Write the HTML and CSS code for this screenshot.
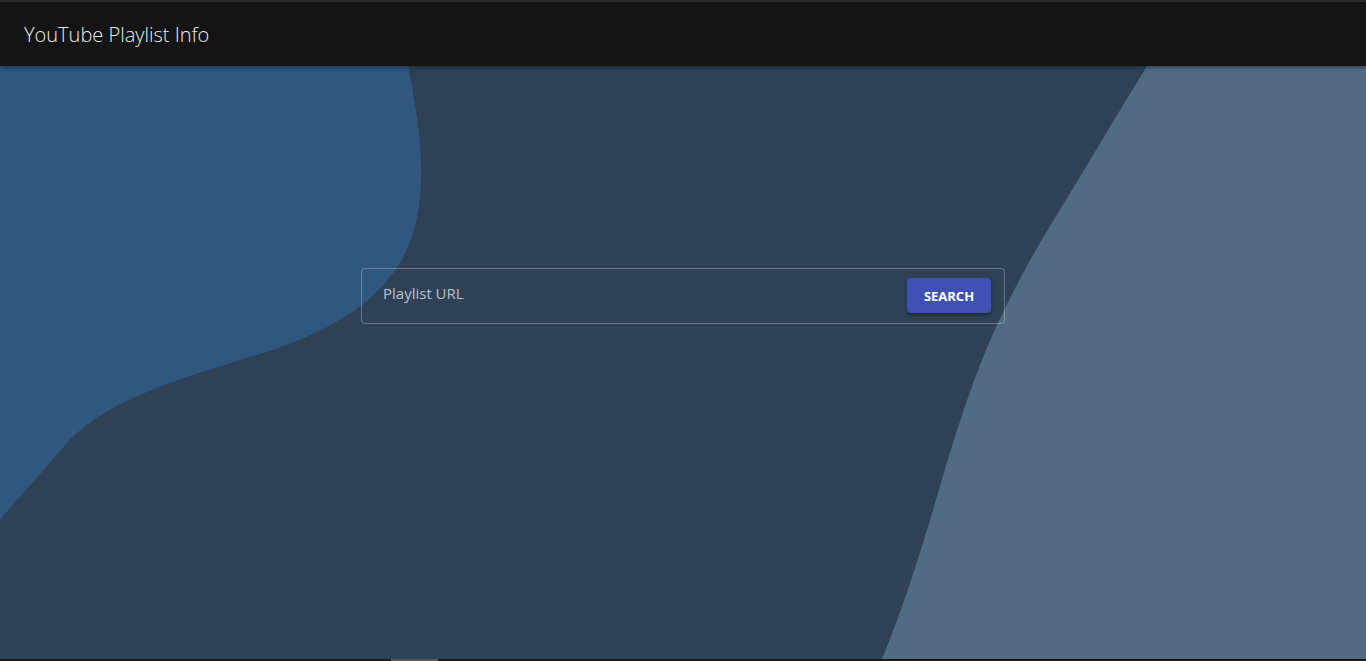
FILE: index.html
```html
<!DOCTYPE html>
<html>
<head>
<meta charset="utf-8">
<link rel="stylesheet" href="styles.css">
</head>
<body>
<header class="appbar">
  <h1 class="title">YouTube Playlist Info</h1>
</header>
<main class="stage">
  <svg class="bg" viewBox="0 0 1366 593" preserveAspectRatio="none" aria-hidden="true">
    <path fill="#305780" d="M0 0 L408 0 C418 50 428 110 415 160 C400 220 350 260 260 288 C170 316 100 335 60 385 C35 415 15 435 0 454 Z"/>
    <path fill="#526b85" d="M1147 0 L1366 0 L1366 593 L882 593 C900 550 920 490 940 420 C970 320 990 260 1050 160 C1090 95 1110 60 1147 0 Z"/>
  </svg>
  <form class="search">
    <span class="placeholder">Playlist URL</span>
    <button type="button" class="btn">SEARCH</button>
  </form>
</main>
<div class="scrollbar"><div class="thumb"></div></div>
</body>
</html>
```
FILE: styles.css
```css
html, body {
  margin: 0;
  padding: 0;
  height: 100%;
  overflow: hidden;
}
body {
  background: #2f4156;
  font-family: "Open Sans", "Noto Sans", sans-serif;
  display: flex;
  flex-direction: column;
}
.appbar {
  height: 64px;
  border-top: 2px solid #2b2b2b;
  background: #141414;
  display: flex;
  align-items: center;
  padding-left: 24px;
  box-shadow: 0 2px 4px rgba(0,0,0,0.35);
  position: relative;
  z-index: 2;
  flex: none;
}
.title {
  margin: 0;
  font-weight: 300;
  font-size: 20px;
  color: #ececec;
  letter-spacing: 0;
}
.stage {
  position: relative;
  flex: 1;
  display: flex;
  justify-content: center;
  align-items: flex-start;
  padding-top: 202px;
}
.bg {
  position: absolute;
  inset: 0;
  width: 100%;
  height: 100%;
}
.search {
  position: relative;
  box-sizing: border-box;
  width: 644px;
  height: 56px;
  border: 1px solid rgba(255,255,255,0.28);
  border-radius: 4px;
  display: flex;
  align-items: center;
  justify-content: space-between;
  padding: 0 13px 0 21px;
}
.placeholder {
  color: #b7c0ca;
  font-size: 15px;
  margin-top: -7px;
}
.btn {
  background: #3f51b5;
  color: #fff;
  border: 0;
  border-radius: 4px;
  height: 35px;
  width: 84px;
  margin-top: -1px;
  font-family: "Open Sans", sans-serif;
  font-weight: 700;
  font-size: 13px;
  box-shadow: 0 2px 3px rgba(0,0,0,0.35);
  padding: 0;
}
.scrollbar {
  height: 2px;
  background: #1b1b1b;
  flex: none;
  display: flex;
  padding-left: 391px;
}
.thumb {
  width: 47px;
  background: #5a5a5a;
}
```
